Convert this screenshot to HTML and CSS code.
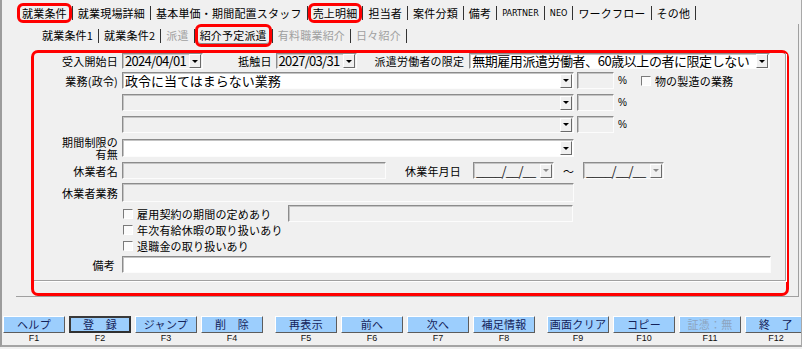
FILE: index.html
```html
<!DOCTYPE html>
<html lang="ja">
<head>
    <meta charset="UTF-8">
    <meta name="viewport" content="width=device-width, initial-scale=1.0">
    <title>就業条件</title>
    <link rel="stylesheet" href="styles.css">
</head>
<body>
<div class="window">
    <div class="tabs">
        <span class="tab marked">就業条件</span><span class="sep"></span>
        <span class="tab">就業現場詳細</span><span class="sep"></span>
        <span class="tab">基本単価・期間配置スタッフ</span><span class="sep"></span>
        <span class="tab marked">売上明細</span><span class="sep"></span>
        <span class="tab">担当者</span><span class="sep"></span>
        <span class="tab">案件分類</span><span class="sep"></span>
        <span class="tab">備考</span><span class="sep"></span>
        <span class="tab latin">PARTNER</span><span class="sep"></span>
        <span class="tab latin">NEO</span><span class="sep"></span>
        <span class="tab">ワークフロー</span><span class="sep"></span>
        <span class="tab">その他</span><span class="sep"></span>
    </div>

    <div class="page">
        <div class="subtabs">
            <span class="tab sub">就業条件1</span><span class="sep"></span>
            <span class="tab sub">就業条件2</span><span class="sep"></span>
            <span class="tab sub off">派遣</span><span class="sep"></span>
            <span class="tab sub marked current">紹介予定派遣</span><span class="sep"></span>
            <span class="tab sub off">有料職業紹介</span><span class="sep"></span>
            <span class="tab sub off">日々紹介</span><span class="sep"></span>
        </div>

        <div class="frame">
            <div class="panel">
                <div class="row r1">
                    <span class="lbl">受入開始日</span>
                    <span class="fld date"><span class="val">2024/04/01</span><span class="dd"></span></span>
                    <span class="lbl2 l-teishoku">抵触日</span>
                    <span class="fld date"><span class="val">2027/03/31</span><span class="dd"></span></span>
                    <span class="lbl2 l-gentei">派遣労働者の限定</span>
                    <span class="fld white limit"><span class="val">無期雇用派遣労働者、60歳以上の者に限定しない</span><span class="dd"></span></span>
                </div>

                <div class="row r2">
                    <span class="lbl">業務(政令)</span>
                    <span class="fld white wide"><span class="val">政令に当てはまらない業務</span><span class="dd"></span></span>
                    <span class="fld pct"></span><span class="unit">%</span>
                    <span class="check c-mono"></span><span class="chk-lbl">物の製造の業務</span>
                </div>
                <div class="row r3">
                    <span class="lbl"></span>
                    <span class="fld wide"><span class="val"></span><span class="dd"></span></span>
                    <span class="fld pct"></span><span class="unit">%</span>
                </div>
                <div class="row r3">
                    <span class="lbl"></span>
                    <span class="fld wide"><span class="val"></span><span class="dd"></span></span>
                    <span class="fld pct"></span><span class="unit">%</span>
                </div>

                <div class="row r5">
                    <span class="lbl two">期間制限の<br>有無</span>
                    <span class="fld white wide"><span class="val"></span><span class="dd"></span></span>
                </div>

                <div class="row r6">
                    <span class="lbl">休業者名</span>
                    <span class="fld name"></span>
                    <span class="lbl2 l-kyugyo">休業年月日</span>
                    <span class="fld date off"><span class="val mask">____/__/__</span><span class="dd"></span></span>
                    <span class="tilde">～</span>
                    <span class="fld date off"><span class="val mask">____/__/__</span><span class="dd"></span></span>
                </div>

                <div class="row r7">
                    <span class="lbl">休業者業務</span>
                    <span class="fld wide"></span>
                </div>

                <div class="row r8">
                    <span class="lbl"></span>
                    <span class="chk-group"><span class="check"></span><span class="chk-lbl">雇用契約の期間の定めあり</span></span>
                    <span class="fld term"></span>
                </div>
                <div class="row r9">
                    <span class="lbl"></span>
                    <span class="check"></span><span class="chk-lbl">年次有給休暇の取り扱いあり</span>
                </div>
                <div class="row r9">
                    <span class="lbl"></span>
                    <span class="check"></span><span class="chk-lbl">退職金の取り扱いあり</span>
                </div>

                <div class="row r11">
                    <span class="lbl l-biko">備考</span>
                    <span class="fld white note"></span>
                </div>
            </div>
        </div>
    </div>

    <div class="fkeys">
        <div class="key"><span class="btn">ヘルプ</span><span class="fn">F1</span></div>
        <div class="key"><span class="btn default">登　録</span><span class="fn">F2</span></div>
        <div class="key"><span class="btn">ジャンプ</span><span class="fn">F3</span></div>
        <div class="key"><span class="btn">削　除</span><span class="fn">F4</span></div>
        <div class="key group"><span class="btn">再表示</span><span class="fn">F5</span></div>
        <div class="key"><span class="btn">前へ</span><span class="fn">F6</span></div>
        <div class="key"><span class="btn">次へ</span><span class="fn">F7</span></div>
        <div class="key"><span class="btn">補足情報</span><span class="fn">F8</span></div>
        <div class="key group"><span class="btn">画面クリア</span><span class="fn">F9</span></div>
        <div class="key"><span class="btn">コピー</span><span class="fn">F10</span></div>
        <div class="key"><span class="btn off">証憑：無</span><span class="fn">F11</span></div>
        <div class="key"><span class="btn">終　了</span><span class="fn">F12</span></div>
    </div>
</div>
</body>
</html>
```

FILE: styles.css
```css
body {
    margin: 0;
    background: #f0f0f0;
    font-family: "Noto Sans CJK JP", "Noto Sans", sans-serif;
    font-size: 11px;
    color: #000;
}

.window {
    width: 802px;
    height: 347px;
    box-sizing: border-box;
    border-left: 2px solid #9c9c9c;
    border-right: 1px solid #a8a8a8;
    border-bottom: 2px solid #a4a4a4;
    overflow: hidden;
}

/* main tabs */
.tabs {
    display: flex;
    align-items: center;
    padding: 3px 0 0 15px;
    height: 20px;
}

.tab {
    border: 3px solid transparent;
    border-radius: 6px;
    padding: 0 2px;
    line-height: 14px;
    letter-spacing: 0.2px;
    white-space: nowrap;
}

.tab.marked {
    border-color: #f00;
}

.tab.latin {
    font-family: "DejaVu Sans Condensed", "Liberation Sans", sans-serif;
    font-size: 9px;
    letter-spacing: 0;
}

.sep {
    width: 1px;
    height: 14px;
    background: #333;
    flex: none;
}

/* tab page */
.page {
    margin: 1px 2px 0 14px;
    height: 272px;
    border-right: 1px solid #a0a0a0;
    border-bottom: 1px solid #a0a0a0;
}

.subtabs {
    display: flex;
    align-items: center;
    height: 23px;
    padding-left: 21px;
}

.tab.sub {
    line-height: 15px;
    padding: 1px 2px;
}

.tab.sub.off {
    color: #a0a0a0;
}

.tab.current {
    box-shadow: inset 0 -1px #8a8a8a;
}

.frame {
    margin: 3px 0 0 15px;
    width: 758px;
    height: 246px;
    box-sizing: border-box;
    border: 3px solid #f00;
    border-radius: 7px;
}

.panel {
    height: 227px;
    border-right: 1px solid #a0a0a0;
    border-bottom: 1px solid #a0a0a0;
    box-shadow: 1px 1px #fff;
}

/* rows */
.row {
    display: flex;
    align-items: center;
    height: 17px;
    margin-top: 5px;
}

.row.r1 { height: 16px; margin-top: 0; }
.row.r2 { margin-top: 3px; }
.row.r5 { height: 20px; }
.row.r6 { margin-top: 4px; }
.row.r7 { height: 19px; margin-top: 4px; }
.row.r8 { margin-top: 3px; }
.row.r9 { height: 16px; margin-top: 0; }
.row.r11 { margin-top: 2px; }

.lbl {
    width: 84px;
    margin-right: 4px;
    text-align: right;
    flex: none;
    letter-spacing: 0.2px;
}

.lbl.two {
    line-height: 12px;
}

.lbl.l-biko {
    width: 81px;
    margin-right: 7px;
}

.lbl2 {
    letter-spacing: 0.2px;
    white-space: nowrap;
}

.l-teishoku { margin: 0 4px 0 35px; }
.l-gentei { margin: 0 5px 0 18px; }
.l-kyugyo { margin: 0 12px 0 19px; }

/* fields */
.fld {
    box-sizing: border-box;
    height: 100%;
    display: flex;
    align-items: center;
    flex: none;
    border: 1px solid;
    border-color: #8c8c8c #fcfcfc #fcfcfc #8c8c8c;
    box-shadow: inset 1px 1px #c4c4c4;
    background: #f0f0f0;
    font-size: 13px;
    color: #000;
}

.fld.white {
    background: #fff;
}

.val {
    flex: 1;
    min-width: 0;
    padding-left: 2px;
    white-space: nowrap;
    line-height: 14px;
}

.r5 .fld { height: 18px; }

.date { width: 81px; }
.date .val { letter-spacing: -0.7px; }
.limit { width: 301px; }
.limit .val { letter-spacing: -0.45px; }
.wide { width: 452px; }
.pct { width: 37px; margin-left: 3px; }
.name { width: 264px; }
.term { width: 285px; }
.note { width: 649px; }

.date .val.mask {
    color: #222;
    letter-spacing: -0.9px;
}

.dd {
    box-sizing: border-box;
    width: 12px;
    height: 14px;
    margin-right: 1px;
    flex: none;
    border: 1px solid;
    border-color: #fff #6a6a6a #6a6a6a #fff;
    background: #f0f0f0;
    display: flex;
    align-items: center;
    justify-content: center;
}

.dd::after {
    content: "";
    border-left: 3px solid transparent;
    border-right: 3px solid transparent;
    border-top: 3px solid #000;
}

.fld.off .dd::after {
    border-top-color: #8a8a8a;
}

.unit {
    margin-left: 4px;
    font-family: "Liberation Sans", sans-serif;
    font-size: 10px;
}

.tilde {
    margin: 0 9px;
    font-size: 11px;
}

/* checkboxes */
.check {
    box-sizing: border-box;
    width: 10px;
    height: 10px;
    flex: none;
    border: 1px solid;
    border-color: #7a7a7a #fff #fff #7a7a7a;
    background: #fbfbfb;
    margin-left: 1px;
}

.check.c-mono {
    margin-left: 14px;
}

.chk-lbl {
    margin-left: 4px;
    letter-spacing: 0.2px;
    white-space: nowrap;
}

.chk-group {
    display: flex;
    align-items: center;
    width: 166px;
    flex: none;
}

/* function keys */
.fkeys {
    display: flex;
    margin-top: 19px;
    padding-left: 1px;
}

.key {
    display: flex;
    flex-direction: column;
    width: 62px;
    flex: none;
    margin-right: 4px;
}

.key.group {
    margin-left: 8px;
}

.btn {
    box-sizing: border-box;
    height: 17px;
    border: 1px solid;
    border-color: #fff #5c5c5c #5c5c5c #fff;
    background: #9ccefd;
    color: #14235a;
    text-align: center;
    line-height: 15px;
    letter-spacing: 0.3px;
}

.btn.default {
    border: 2px solid;
    border-color: #3a3a3a #303030 #303030 #3a3a3a;
    line-height: 13px;
}

.btn.off {
    color: #8ca4c0;
}

.fn {
    height: 10px;
    line-height: 10px;
    text-align: center;
    font-family: "Liberation Sans", sans-serif;
    font-size: 9px;
    color: #111;
}
```
